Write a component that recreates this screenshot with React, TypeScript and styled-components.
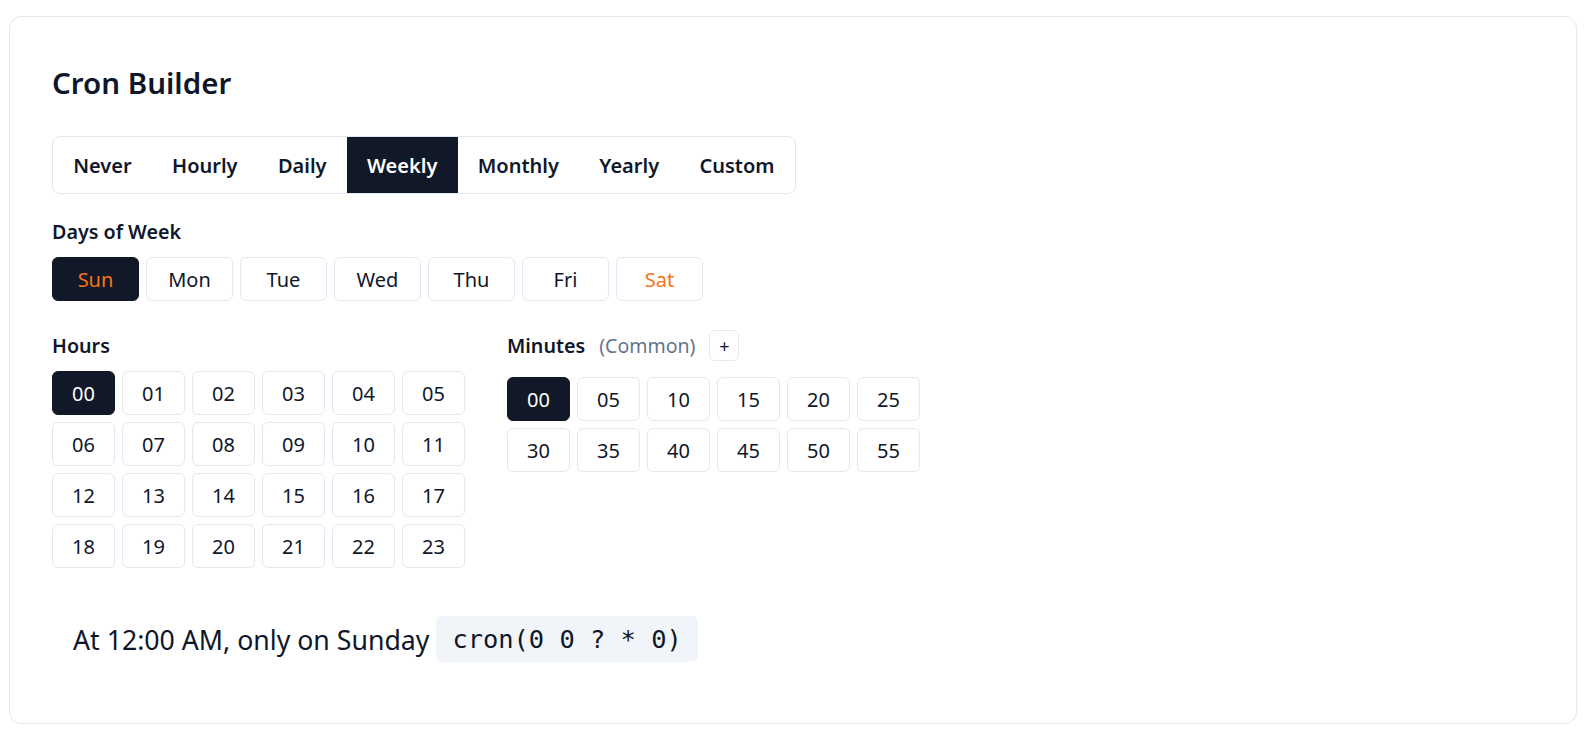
import styled, { createGlobalStyle } from "styled-components";

const GlobalStyle = createGlobalStyle`
  html, body {
    margin: 0;
    background: #ffffff;
    font-family: "Noto Sans", "Open Sans", sans-serif;
    color: #0f172a;
  }
  * {
    box-sizing: border-box;
  }
`;

const Page = styled.div`
  padding: 16px 13px 12px 9px;
`;

const Card = styled.div`
  border: 1px solid #e2e8f0;
  border-radius: 12px;
  height: 708px;
  padding: 48px 42px 0;
  display: flex;
  flex-direction: column;
`;

const Title = styled.h1`
  margin: 0;
  font-size: 29.5px;
  line-height: 36px;
  font-weight: 600;
  color: #0f172a;
`;

const Tabs = styled.div`
  margin-top: 35px;
  display: flex;
  align-self: flex-start;
  border: 1px solid #e2e8f0;
  border-radius: 8px;
  overflow: hidden;
  height: 58px;
`;

const Tab = styled.button<{ $active?: boolean }>`
  border: none;
  margin: 0;
  padding: 0 20.2px;
  font-family: inherit;
  font-size: 20px;
  font-weight: 600;
  cursor: pointer;
  background: ${({ $active }) => ($active ? "#111827" : "transparent")};
  color: ${({ $active }) => ($active ? "#ffffff" : "#0f172a")};
`;

const Label = styled.div`
  font-size: 19.7px;
  font-weight: 600;
  line-height: 26px;
  color: #0f172a;
`;

const DaysLabel = styled(Label)`
  margin-top: 25px;
`;

const DayRow = styled.div`
  margin-top: 12px;
  display: flex;
  gap: 7px;
`;

const Chip = styled.button<{ $active?: boolean; $weekend?: boolean }>`
  height: 44px;
  border: 1px solid ${({ $active }) => ($active ? "#111827" : "#e2e8f0")};
  border-radius: 6px;
  background: ${({ $active }) => ($active ? "#111827" : "#ffffff")};
  color: ${({ $active, $weekend }) =>
    $weekend ? "#f97316" : $active ? "#ffffff" : "#0f172a"};
  font-family: inherit;
  font-size: 20px;
  font-weight: 400;
  padding: 0;
  cursor: pointer;
`;

const DayChip = styled(Chip)`
  width: 87px;
`;

const Columns = styled.div`
  margin-top: 27px;
  display: flex;
  gap: 42px;
  align-items: flex-start;
`;

const Column = styled.div`
  display: flex;
  flex-direction: column;
`;

const ColumnHead = styled.div`
  display: flex;
  align-items: center;
  gap: 14px;
  min-height: 35px;
`;

const Muted = styled.span`
  font-size: 19.5px;
  color: #64748b;
  font-weight: 400;
`;

const PlusButton = styled.button`
  width: 30px;
  height: 31px;
  border: 1px solid #e2e8f0;
  border-radius: 6px;
  background: #ffffff;
  font-family: inherit;
  font-size: 18px;
  line-height: 1;
  color: #0f172a;
  padding: 0;
  cursor: pointer;
`;

const Grid = styled.div<{ $offset: number }>`
  margin-top: ${({ $offset }) => $offset}px;
  display: grid;
  grid-template-columns: repeat(6, 63px);
  grid-auto-rows: 44px;
  gap: 7px;
`;

const Summary = styled.div`
  margin-top: 48px;
  padding-left: 21px;
  display: flex;
  align-items: center;
  gap: 7px;
  font-size: 26.7px;
  color: #0f172a;
`;

const Code = styled.code`
  background: #f1f5f9;
  border-radius: 6px;
  padding: 0 16px;
  height: 46px;
  display: inline-flex;
  align-items: center;
  font-family: "DejaVu Sans Mono", "Liberation Mono", monospace;
  font-size: 25.4px;
  color: #0f172a;
`;

const modes = ["Never", "Hourly", "Daily", "Weekly", "Monthly", "Yearly", "Custom"];
const days = ["Sun", "Mon", "Tue", "Wed", "Thu", "Fri", "Sat"];
const hours = Array.from({ length: 24 }, (_, i) => String(i).padStart(2, "0"));
const minutes = Array.from({ length: 12 }, (_, i) => String(i * 5).padStart(2, "0"));

export default function App() {
  return (
    <Page>
      <GlobalStyle />
      <Card>
        <Title>Cron Builder</Title>
        <Tabs>
          {modes.map((m) => (
            <Tab key={m} $active={m === "Weekly"}>
              {m}
            </Tab>
          ))}
        </Tabs>

        <DaysLabel>Days of Week</DaysLabel>
        <DayRow>
          {days.map((d, i) => (
            <DayChip key={d} $active={i === 0} $weekend={i === 0 || i === 6}>
              {d}
            </DayChip>
          ))}
        </DayRow>

        <Columns>
          <Column>
            <ColumnHead>
              <Label>Hours</Label>
            </ColumnHead>
            <Grid $offset={8}>
              {hours.map((h) => (
                <Chip key={h} $active={h === "00"}>
                  {h}
                </Chip>
              ))}
            </Grid>
          </Column>
          <Column>
            <ColumnHead>
              <Label>Minutes</Label>
              <Muted>(Common)</Muted>
              <PlusButton>+</PlusButton>
            </ColumnHead>
            <Grid $offset={14}>
              {minutes.map((m) => (
                <Chip key={m} $active={m === "00"}>
                  {m}
                </Chip>
              ))}
            </Grid>
          </Column>
        </Columns>

        <Summary>
          <span>At 12:00 AM, only on Sunday</span>
          <Code>cron(0 0 ? * 0)</Code>
        </Summary>
      </Card>
    </Page>
  );
}
